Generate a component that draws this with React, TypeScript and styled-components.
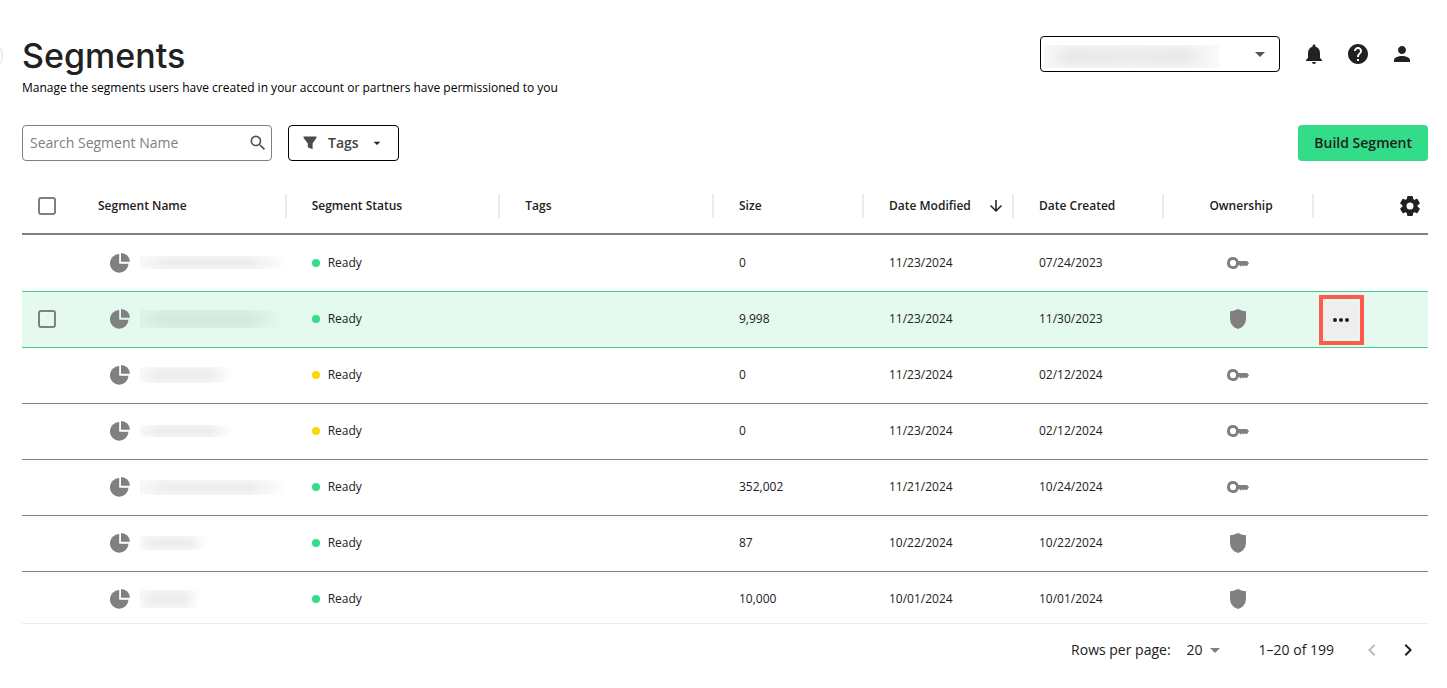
import React from "react";
import styled, { createGlobalStyle } from "styled-components";
import {
  MdArrowDownward,
  MdArrowDropDown,
  MdChevronLeft,
  MdChevronRight,
  MdHelp,
  MdMoreHoriz,
  MdNotifications,
  MdPerson,
  MdSearch,
} from "react-icons/md";

const GlobalStyle = createGlobalStyle`
  *, *::before, *::after { box-sizing: border-box; }
  body {
    margin: 0;
    background: #fff;
    color: #212121;
    font-family: "Open Sans", "Noto Sans", sans-serif;
    font-size: 12px;
    line-height: 18px;
  }
  button, input, select { font: inherit; color: inherit; }
  svg { flex: none; }
`;

const Page = styled.main`
  display: flex;
  flex-direction: column;
  height: 100vh;
  padding: 36px 19px 0 22px;
  overflow: hidden;
`;

const DrawerHandle = styled.button`
  position: absolute;
  top: 44px;
  left: -22px;
  width: 24px;
  height: 24px;
  padding: 0;
  border: 0;
  border-radius: 50%;
  background: #fff;
  box-shadow: 0 0 2px rgba(0, 0, 0, 0.35);
`;

const PageHeader = styled.header`
  display: flex;
  justify-content: space-between;
  align-items: flex-start;
`;

const Title = styled.h1`
  margin: 0;
  font-family: Inter, "Liberation Sans", sans-serif;
  font-size: 34px;
  font-weight: 500;
  line-height: 40px;
`;

const Subtitle = styled.p`
  margin: 3px 0 0;
  color: #000;
`;

const AccountBar = styled.div`
  display: flex;
  align-items: center;
  padding-right: 4px;
`;

const AccountSelect = styled.div`
  position: relative;
  display: flex;
  align-items: center;
  width: 240px;
  height: 36px;
  margin-right: 12px;
`;

const AccountField = styled.select`
  width: 100%;
  height: 100%;
  appearance: none;
  border: 1px solid #000;
  border-radius: 4px;
  background: #fff;
`;

const AccountMask = styled.span`
  position: absolute;
  left: 4px;
  top: 9px;
  width: 175px;
  height: 23px;
  background: linear-gradient(to right, #f7f7f7, #e9e9e9 15%, #ebebeb 50%, #e9e9e9 80%, #fcfcfc);
  box-shadow: inset 0 0 8px 2px #f8f8f8;
  pointer-events: none;
`;

const SelectArrow = styled(MdArrowDropDown)`
  position: absolute;
  right: 8px;
  color: #555;
  pointer-events: none;
`;

const IconButton = styled.button<{ $size: number }>`
  display: inline-flex;
  align-items: center;
  justify-content: center;
  width: ${(p) => p.$size}px;
  height: 36px;
  padding: 0;
  border: 0;
  border-radius: 4px;
  background: none;

  &:disabled { color: #bdbdbd; }
`;

const Toolbar = styled.div`
  display: flex;
  align-items: center;
  gap: 16px;
  margin: 28px 0 17px;
  font-size: 14px;
`;

const SearchBox = styled.label`
  display: flex;
  align-items: center;
  width: 250px;
  height: 36px;
  padding: 0 3px 0 7px;
  border: 1px solid #808080;
  border-radius: 4px;
  color: #555;
`;

const SearchInput = styled.input`
  flex: 1;
  min-width: 0;
  padding: 0;
  border: 0;
  outline: 0;
  background: none;

  &::placeholder { color: #808080; opacity: 1; }
`;

const TagsButton = styled.button`
  display: flex;
  align-items: center;
  height: 36px;
  padding: 0 13px 0 14px;
  border: 1px solid #000;
  border-radius: 4px;
  background: #fff;
  color: #444;
  font-weight: 600;
`;

const TagsLabel = styled.span`
  margin: 0 10px 0 11px;
`;

const BuildButton = styled.button`
  height: 36px;
  margin-left: auto;
  padding: 0 16px;
  border: 0;
  border-radius: 4px;
  background: #32dc88;
  color: #212121;
  font-weight: 600;
`;

const TableScroll = styled.div`
  flex: 1;
  min-height: 0;
  overflow: auto;
  scrollbar-width: none;
`;

const Table = styled.table`
  width: 100%;
  table-layout: fixed;
  border-collapse: separate;
  border-spacing: 0;
`;

const Col = styled.col<{ $width?: number }>`
  width: ${(p) => (p.$width ? `${p.$width}px` : "auto")};
`;

const HeadCell = styled.th`
  height: 57px;
  padding: 0;
  border-bottom: 2px solid #808080;
  font-weight: 600;
  text-align: left;
`;

const HeadContent = styled.div<{ $divider?: boolean; $align?: string; $pad?: number }>`
  display: flex;
  align-items: center;
  justify-content: ${(p) => p.$align ?? "flex-start"};
  height: 24px;
  margin-right: ${(p) => (p.$divider ? "-1px" : "0")};
  padding: 0 5px 0 ${(p) => p.$pad ?? 26}px;
  border-right: ${(p) => (p.$divider ? "2px solid #ececec" : "0")};
`;

const Row = styled.tr<{ $active: boolean; $afterActive: boolean }>`
  background: ${(p) => (p.$active ? "#e4faef" : "#fff")};

  & > td {
    border-top: 1px solid ${(p) => (p.$active || p.$afterActive ? "#44cf89" : "#808080")};
  }
  &:first-child > td { border-top: 0; }
`;

const Cell = styled.td<{ $pad?: number }>`
  height: 56px;
  padding: 0 0 1px ${(p) => p.$pad ?? 26}px;
`;

const ActionCell = styled(Cell)`
  padding-bottom: 0;
`;

const CellContent = styled.div<{ $gap?: number; $center?: boolean }>`
  display: flex;
  align-items: center;
  justify-content: ${(p) => (p.$center ? "center" : "flex-start")};
  gap: ${(p) => p.$gap ?? 0}px;
  color: ${(p) => (p.$center ? "#808080" : "inherit")};
`;

const Checkbox = styled.input`
  display: block;
  width: 18px;
  height: 18px;
  margin: 0;
  appearance: none;
  border: 2px solid #808080;
  border-radius: 3px;
`;

const NameMask = styled.span<{ $width: number; $height: number }>`
  flex: none;
  width: ${(p) => p.$width}px;
  height: ${(p) => p.$height}px;
  background: linear-gradient(
    to right,
    rgba(0, 0, 0, 0.03),
    rgba(0, 0, 0, 0.07) 20%,
    rgba(0, 0, 0, 0.07) 75%,
    rgba(0, 0, 0, 0)
  );
  mask-image: linear-gradient(rgba(0, 0, 0, 0.6), #000 40%, #000 60%, rgba(0, 0, 0, 0.6));
`;

const Dot = styled.span<{ $color: string }>`
  width: 8px;
  height: 8px;
  border-radius: 50%;
  background: ${(p) => p.$color};
`;

const Highlight = styled.div`
  display: flex;
  align-items: center;
  width: 45px;
  height: 50px;
  border: 4px solid #ff5a4c;
`;

const MoreButton = styled(IconButton)`
  background: #eee;
`;

const Pagination = styled.footer`
  display: flex;
  align-items: center;
  justify-content: flex-end;
  height: 65px;
  padding: 0 2px 12px 0;
  border-top: 1px solid #ececec;
  font-size: 14px;
`;

const PageSize = styled.label`
  position: relative;
  display: flex;
  align-items: center;
  gap: 16px;
`;

const PageSizeSelect = styled.select`
  width: 40px;
  padding: 0;
  appearance: none;
  border: 0;
  background: none;
`;

const PageSizeArrow = styled(MdArrowDropDown)`
  position: absolute;
  right: 0;
  color: #808080;
  pointer-events: none;
`;

const Range = styled.span`
  margin: 0 20px 0 32px;
`;

const PieIcon = () => (
  <svg width="20" height="20" viewBox="0 0 20 20" fill="#808080" aria-hidden="true">
    <path d="M9.2 1.1A9.3 9.3 0 1 0 18.5 10.8H9.2Z" />
    <path d="M11 0V8.8H20A9 9 0 0 0 11 0Z" />
  </svg>
);

const FunnelIcon = () => (
  <svg width="14" height="14" viewBox="0 0 14 14" fill="#4a4a4a" aria-hidden="true">
    <path d="M.5.6Q.5.4.8.4H13.2Q13.5.4 13.5.6V1.8L9.6 7.4V13.2L4.8 11.2V7.4L.5 1.8Z" />
  </svg>
);

const KeyIcon = () => (
  <svg width="22" height="12" viewBox="0 0 22 12" fill="#808080" aria-hidden="true">
    <path
      fillRule="evenodd"
      d="M6 0A6 6 0 1 0 11.6 8.2H12.6L13.8 9.4L15.2 8.2L16.6 9.4L18 8.2L19 9H20L22 6.2L20.2 3.9H11.6A6 6 0 0 0 6 0ZM6 2.9A3.1 3.1 0 1 1 6 9.1A3.1 3.1 0 0 1 6 2.9Z"
    />
  </svg>
);

const ShieldIcon = () => (
  <svg width="16" height="20" viewBox="0 0 16 20" fill="#808080" aria-hidden="true">
    <path d="M8 0C10.4 1.3 13 2 16 2.3V9.5C16 14.5 13 18.6 8 20C3 18.6 0 14.5 0 9.5V2.3C3 2 5.6 1.3 8 0Z" />
  </svg>
);

const GearIcon = () => (
  <svg width="20" height="20" viewBox="-10 -10 20 20" fill="#212121" aria-hidden="true">
    <circle r="5.6" fill="none" stroke="#212121" strokeWidth="4.2" />
    {[0, 60, 120, 180, 240, 300].map((angle) => (
      <rect key={angle} x="-3" y="-10" width="6" height="5" rx="1.2" transform={`rotate(${angle})`} />
    ))}
  </svg>
);

const GREEN = "#32dc88";
const YELLOW = "#ffd60a";

const segments = [
  { mask: [147, 13], color: GREEN, size: "0", modified: "11/23/2024", created: "07/24/2023", owned: true },
  { mask: [142, 18], color: GREEN, size: "9,998", modified: "11/23/2024", created: "11/30/2023", owned: false },
  { mask: [92, 16], color: YELLOW, size: "0", modified: "11/23/2024", created: "02/12/2024", owned: true },
  { mask: [92, 12], color: YELLOW, size: "0", modified: "11/23/2024", created: "02/12/2024", owned: true },
  { mask: [147, 15], color: GREEN, size: "352,002", modified: "11/21/2024", created: "10/24/2024", owned: true },
  { mask: [66, 14], color: GREEN, size: "87", modified: "10/22/2024", created: "10/22/2024", owned: false },
  { mask: [60, 18], color: GREEN, size: "10,000", modified: "10/01/2024", created: "10/01/2024", owned: false },
];

const ACTIVE = 1;

export default function App() {
  return (
    <Page>
      <GlobalStyle />
      <DrawerHandle aria-label="Open navigation" />
      <PageHeader>
        <div>
          <Title>Segments</Title>
          <Subtitle>
            Manage the segments users have created in your account or partners have permissioned to you
          </Subtitle>
        </div>
        <AccountBar>
          <AccountSelect>
            <AccountField aria-label="Account" />
            <AccountMask />
            <SelectArrow size={24} />
          </AccountSelect>
          <IconButton $size={44} aria-label="Notifications"><MdNotifications size={24} /></IconButton>
          <IconButton $size={44} aria-label="Help"><MdHelp size={24} /></IconButton>
          <IconButton $size={44} aria-label="Profile"><MdPerson size={24} /></IconButton>
        </AccountBar>
      </PageHeader>

      <Toolbar>
        <SearchBox>
          <SearchInput type="text" placeholder="Search Segment Name" aria-label="Search Segment Name" />
          <MdSearch size={20} />
        </SearchBox>
        <TagsButton>
          <FunnelIcon />
          <TagsLabel>Tags</TagsLabel>
          <MdArrowDropDown size={16} color="#212121" />
        </TagsButton>
        <BuildButton>Build Segment</BuildButton>
      </Toolbar>

      <TableScroll>
        <Table>
          <colgroup>
            <Col $width={50} />
            <Col />
            <Col />
            <Col />
            <Col $width={150} />
            <Col $width={150} />
            <Col $width={150} />
            <Col $width={150} />
            <Col $width={115} />
          </colgroup>
          <thead>
            <tr>
              <HeadCell>
                <HeadContent $pad={16}><Checkbox type="checkbox" aria-label="Select all" /></HeadContent>
              </HeadCell>
              <HeadCell><HeadContent $divider>Segment Name</HeadContent></HeadCell>
              <HeadCell><HeadContent $divider>Segment Status</HeadContent></HeadCell>
              <HeadCell><HeadContent $divider>Tags</HeadContent></HeadCell>
              <HeadCell><HeadContent $divider>Size</HeadContent></HeadCell>
              <HeadCell>
                <HeadContent $divider $align="space-between">
                  Date Modified
                  <IconButton $size={22} aria-label="Sort descending"><MdArrowDownward size={18} /></IconButton>
                </HeadContent>
              </HeadCell>
              <HeadCell><HeadContent $divider>Date Created</HeadContent></HeadCell>
              <HeadCell><HeadContent $divider $align="center" $pad={12}>Ownership</HeadContent></HeadCell>
              <HeadCell>
                <HeadContent $align="flex-end" $pad={0}>
                  <IconButton $size={26} aria-label="Table settings"><GearIcon /></IconButton>
                </HeadContent>
              </HeadCell>
            </tr>
          </thead>
          <tbody>
            {segments.map((s, i) => (
              <Row key={i} $active={i === ACTIVE} $afterActive={i === ACTIVE + 1}>
                <Cell $pad={16}>
                  {i === ACTIVE && <Checkbox type="checkbox" aria-label="Select segment" />}
                </Cell>
                <Cell $pad={38}>
                  <CellContent $gap={10}>
                    <PieIcon />
                    <NameMask $width={s.mask[0]} $height={s.mask[1]} />
                  </CellContent>
                </Cell>
                <Cell>
                  <CellContent $gap={8}><Dot $color={s.color} />Ready</CellContent>
                </Cell>
                <Cell />
                <Cell>{s.size}</Cell>
                <Cell>{s.modified}</Cell>
                <Cell>{s.created}</Cell>
                <Cell $pad={0}>
                  <CellContent $center>{s.owned ? <KeyIcon /> : <ShieldIcon />}</CellContent>
                </Cell>
                <ActionCell $pad={6}>
                  {i === ACTIVE && (
                    <Highlight>
                      <MoreButton $size={36} aria-label="More actions"><MdMoreHoriz size={24} /></MoreButton>
                    </Highlight>
                  )}
                </ActionCell>
              </Row>
            ))}
          </tbody>
        </Table>
      </TableScroll>

      <Pagination>
        <PageSize>
          Rows per page:
          <PageSizeSelect defaultValue="20">
            <option>20</option>
            <option>50</option>
          </PageSizeSelect>
          <PageSizeArrow size={24} />
        </PageSize>
        <Range>1–20 of 199</Range>
        <IconButton $size={36} aria-label="Previous page" disabled><MdChevronLeft size={24} /></IconButton>
        <IconButton $size={36} aria-label="Next page"><MdChevronRight size={24} /></IconButton>
      </Pagination>
    </Page>
  );
}
